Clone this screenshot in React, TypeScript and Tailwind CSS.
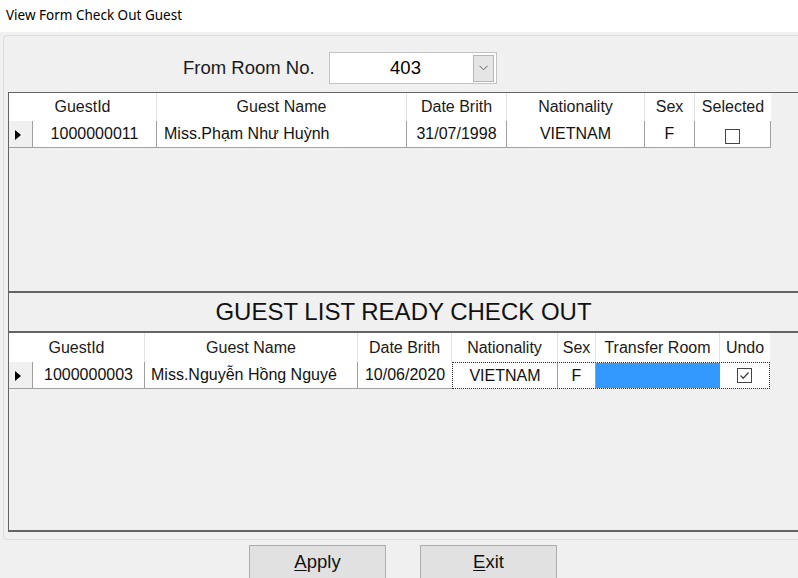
import React from 'react';

type Col = { label: string; w: number };

const topCols: Col[] = [
  { label: 'GuestId', w: 124 },
  { label: 'Guest Name', w: 250 },
  { label: 'Date Brith', w: 100 },
  { label: 'Nationality', w: 138 },
  { label: 'Sex', w: 50 },
  { label: 'Selected', w: 76 },
];

const bottomCols: Col[] = [
  { label: 'GuestId', w: 112 },
  { label: 'Guest Name', w: 213 },
  { label: 'Date Brith', w: 94 },
  { label: 'Nationality', w: 106 },
  { label: 'Sex', w: 38 },
  { label: 'Transfer Room', w: 124 },
  { label: 'Undo', w: 50 },
];

function Box({ checked }: { checked?: boolean }) {
  return (
    <div className="w-[15px] h-[15px] border border-[#444444] bg-white flex items-center justify-center">
      {checked && (
        <svg width="13" height="13" viewBox="0 0 13 13">
          <path d="M2.5 6.5 L5.2 9.2 L10.5 3.5" fill="none" stroke="#444444" strokeWidth="1.3" />
        </svg>
      )}
    </div>
  );
}

function RowMarker() {
  return (
    <div className="w-[24px] shrink-0 bg-[#f0f0f0] border-r border-[#a0a0a0] flex items-center justify-center">
      <svg width="6" height="10" viewBox="0 0 6 10" className="ml-[-6px] mt-[2px]">
        <path d="M0 0 L6 5 L0 10 Z" fill="#000" />
      </svg>
    </div>
  );
}

// header: the first label is centred over the row-header cell plus its column
function Header({ cols }: { cols: Col[] }) {
  return (
    <div className="flex bg-white w-fit">
      {cols.map((c, i) => (
        <div
          key={i}
          style={{ width: i === 0 ? c.w + 24 : c.w }}
          className={`shrink-0 flex items-center justify-center text-[#1a1a1a] ${
            i < cols.length - 1 ? 'border-r border-[#e3e3e3]' : ''
          }`}
        >
          {c.label}
        </div>
      ))}
    </div>
  );
}

export default function App() {
  return (
    <div className="w-[798px] h-[578px] overflow-hidden bg-[#f0f0f0] font-['Liberation_Sans',Arial,sans-serif] text-black">
      <div className="h-[32px] bg-white flex items-center pl-[6px] pb-[2px] text-[13.5px] font-['Noto_Sans',sans-serif] text-black">
        View Form Check Out Guest
      </div>

      <div className="ml-[3px] mt-[3px] w-[820px] h-[505px] border border-[#dcdcdc] rounded-[4px] pl-[4px] pt-[16px]">
        <div className="flex items-center h-[32px]">
          <div className="ml-[175px] text-[18.5px] text-[#1a1a1a] w-[146px]">From Room No.</div>
          <div className="w-[168px] h-[32px] bg-white border border-[#c4c4c4] flex items-center pr-[2px]">
            <div className="flex-1 text-center text-[18.5px] pl-[8px]">403</div>
            <div className="w-[21px] h-[27px] bg-[#e5e5e5] border border-[#b5b5b5] flex items-center justify-center">
              <svg width="9" height="6" viewBox="0 0 9 6">
                <path d="M0.5 0.8 L4.5 4.8 L8.5 0.8" fill="none" stroke="#606060" strokeWidth="1" />
              </svg>
            </div>
          </div>
        </div>

        <div className="mt-[8px] border-l border-[#646464] text-[16px] text-[#111111]">
          {/* top grid */}
          <div className="h-[201px] border-t border-b-2 border-[#646464]">
            <div className="h-[28px] flex">
              <Header cols={topCols} />
            </div>
            <div className="h-[27px] flex w-fit border-b border-[#a0a0a0]">
              <RowMarker />
              <div style={{ width: 124 }} className="bg-white border-r border-[#a0a0a0] flex items-center justify-center">1000000011</div>
              <div style={{ width: 250 }} className="bg-white border-r border-[#a0a0a0] flex items-center pl-[7px]">Miss.Phạm Như Huỳnh</div>
              <div style={{ width: 100 }} className="bg-white border-r border-[#a0a0a0] flex items-center justify-center">31/07/1998</div>
              <div style={{ width: 138 }} className="bg-white border-r border-[#a0a0a0] flex items-center justify-center">VIETNAM</div>
              <div style={{ width: 50 }} className="bg-white border-r border-[#a0a0a0] flex items-center justify-center">F</div>
              <div style={{ width: 76 }} className="bg-white border-r border-[#a0a0a0] flex items-center justify-center pt-[4px]">
                <Box />
              </div>
            </div>
          </div>

          <div className="h-[38px] flex items-center justify-center pr-[24px] text-[24px] text-[#111111]">
            GUEST LIST READY CHECK OUT
          </div>

          {/* bottom grid */}
          <div className="h-[201px] border-t-2 border-b-2 border-[#646464]">
            <div className="h-[29px] flex">
              <Header cols={bottomCols} />
            </div>
            <div className="h-[27px] flex w-fit">
              <div className="flex border-b border-[#a0a0a0]">
                <RowMarker />
                <div style={{ width: 112 }} className="bg-white border-r border-[#a0a0a0] flex items-center justify-center">1000000003</div>
                <div style={{ width: 213 }} className="bg-white border-r border-[#a0a0a0] flex items-center pl-[6px] overflow-hidden whitespace-nowrap">Miss.Nguyễn Hồng Nguyê</div>
                <div style={{ width: 94 }} className="bg-white flex items-center justify-center">10/06/2020</div>
              </div>
              <div className="flex border border-dotted border-[#333333]">
                <div style={{ width: 105 }} className="bg-white border-r border-[#a0a0a0] flex items-center justify-center">VIETNAM</div>
                <div style={{ width: 38 }} className="bg-white border-r border-[#a0a0a0] flex items-center justify-center">F</div>
                <div style={{ width: 124 }} className="bg-[#3399ff]" />
                <div style={{ width: 49 }} className="bg-white flex items-center justify-center">
                  <Box checked />
                </div>
              </div>
            </div>
          </div>
        </div>
      </div>

      <div className="flex mt-[5px]">
        <button className="ml-[249px] w-[137px] h-[36px] bg-[#e1e1e1] border border-[#adadad] text-[18.5px] text-[#111111] pb-[2px]">
          <span className="underline underline-offset-2">A</span>pply
        </button>
        <button className="ml-[34px] w-[137px] h-[36px] bg-[#e1e1e1] border border-[#adadad] text-[18.5px] text-[#111111] pb-[2px]">
          <span className="underline underline-offset-2">E</span>xit
        </button>
      </div>
    </div>
  );
}
